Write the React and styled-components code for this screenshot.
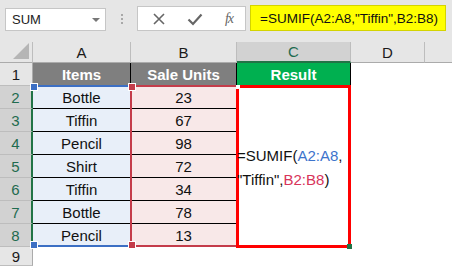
import React from 'react'
import styled, { createGlobalStyle } from 'styled-components'

const GlobalStyle = createGlobalStyle`
  body {
    margin: 0;
    background: #ffffff;
    font-family: "Liberation Sans", Arial, sans-serif;
  }
`

const items = [
  ['Bottle', 23],
  ['Tiffin', 67],
  ['Pencil', 98],
  ['Shirt', 72],
  ['Tiffin', 34],
  ['Bottle', 78],
  ['Pencil', 13],
]

const App = () => {
  return (
    <Sheet>
      <GlobalStyle />
      <Toolbar>
        <NameBox>
          <span>SUM</span>
          <Caret />
        </NameBox>
        <Dots>
          <i /><i /><i />
        </Dots>
        <Buttons>
          <svg width="14" height="14" viewBox="0 0 14 14">
            <path d="M2 2 L12 12 M12 2 L2 12" stroke="#666" strokeWidth="1.6" fill="none" />
          </svg>
          <svg width="16" height="14" viewBox="0 0 16 14">
            <path d="M1.5 7.5 L6 12 L14.5 2.5" stroke="#666" strokeWidth="2.2" fill="none" />
          </svg>
          <Fx>fx</Fx>
        </Buttons>
        <FormulaInput>=SUMIF(A2:A8,"Tiffin",B2:B8)</FormulaInput>
      </Toolbar>

      <Grid>
        <Corner>
          <svg width="16" height="16" viewBox="0 0 16 16">
            <path d="M16 0 L16 16 L0 16 Z" fill="#b5b5b5" />
          </svg>
        </Corner>
        <ColHead $col={2}>A</ColHead>
        <ColHead $col={3}>B</ColHead>
        <ColHead $col={4} $active>C</ColHead>
        <ColHead $col={5}>D</ColHead>
        <ColHead $col={6} $last />

        <RowHead $row={2}>1</RowHead>
        <TitleCell $row={2} $col={2} $bg="#7f7f7f">Items</TitleCell>
        <TitleCell $row={2} $col={3} $bg="#7f7f7f">Sale Units</TitleCell>
        <TitleCell $row={2} $col={4} $bg="#00b050">Result</TitleCell>

        {items.map(([name, units], i) => (
          <React.Fragment key={i}>
            <RowHead $row={i + 3} $active>{i + 2}</RowHead>
            <DataCell $row={i + 3} $col={2} $bg="#e8eff9">{name}</DataCell>
            <DataCell $row={i + 3} $col={3} $bg="#f8e8e8">{units}</DataCell>
          </React.Fragment>
        ))}

        <ResultCell>
          <div>
            =SUMIF(<Ref $c="#3d74cc">A2:A8</Ref>,<br />
            "Tiffin",<Ref $c="#d8345a">B2:B8</Ref>)
          </div>
        </ResultCell>

        <RangeBox $col={2} $c="#3c6fc4">
          <Handle $c="#3c6fc4" $pos="tl" />
          <Handle $c="#3c6fc4" $pos="bl" />
        </RangeBox>
        <RangeBox $col={3} $c="#c43c4a">
          <Handle $c="#c43c4a" $pos="tl" />
          <Handle $c="#c43c4a" $pos="bl" />
        </RangeBox>

        <RowHead $row={10}>9</RowHead>
      </Grid>
    </Sheet>
  )
}

const Sheet = styled.div`
  width: 452px;
  height: 267px;
  overflow: hidden;
  background: #ffffff;
`

const Toolbar = styled.div`
  height: 42px;
  box-sizing: border-box;
  background: #e6e6e6;
  display: flex;
  align-items: flex-end;
  padding: 0 0 11px 5px;
`

const NameBox = styled.div`
  width: 101px;
  height: 23px;
  box-sizing: border-box;
  background: #ffffff;
  border: 1px solid #c6c6c6;
  display: flex;
  align-items: center;
  justify-content: space-between;
  padding: 0 5px 0 6px;
  font-size: 13px;
  color: #222;
`

const Caret = styled.span`
  width: 0;
  height: 0;
  border-left: 4px solid transparent;
  border-right: 4px solid transparent;
  border-top: 4px solid #777;
`

const Dots = styled.div`
  width: 31px;
  height: 25px;
  display: flex;
  flex-direction: column;
  align-items: center;
  justify-content: center;
  gap: 2px;

  i {
    width: 2px;
    height: 2px;
    background: #a8a8a8;
  }
`

const Buttons = styled.div`
  width: 109px;
  height: 25px;
  box-sizing: border-box;
  background: #ffffff;
  border: 1px solid #c6c6c6;
  display: flex;
  align-items: center;
  justify-content: space-between;
  padding: 0 12px 0 14px;
`

const Fx = styled.span`
  font-family: "Liberation Serif", "Times New Roman", serif;
  font-style: italic;
  font-size: 14px;
  color: #666;
  letter-spacing: -1px;
`

const FormulaInput = styled.div`
  margin-left: 4px;
  width: 196px;
  height: 26px;
  box-sizing: border-box;
  background: #ffff00;
  border: 1px solid #d4d400;
  display: flex;
  align-items: center;
  padding-left: 9px;
  font-size: 13.5px;
  color: #111;
  white-space: nowrap;
  overflow: hidden;
`

const Grid = styled.div`
  display: grid;
  grid-template-columns: 33px 98px 106px 114px 74px 1fr;
  grid-template-rows: 21px 23px repeat(7, 23px) 19px;
  font-size: 15px;
`

const Corner = styled.div`
  grid-row: 1;
  grid-column: 1;
  background: #e6e6e6;
  border-right: 1px solid #bdbdbd;
  border-bottom: 1px solid #ababab;
  display: flex;
  align-items: flex-end;
  justify-content: flex-end;
  padding: 0 3px 3px 0;
`

const ColHead = styled.div`
  grid-row: 1;
  grid-column: ${p => p.$col};
  background: ${p => (p.$active ? '#d2d2d2' : '#e6e6e6')};
  color: ${p => (p.$active ? '#1f6b4f' : '#1a1a1a')};
  border-right: ${p => (p.$last ? 'none' : '1px solid #bdbdbd')};
  border-bottom: ${p => (p.$active ? '2px solid #217346' : '1px solid #ababab')};
  display: flex;
  align-items: center;
  justify-content: center;
`

const RowHead = styled.div`
  grid-column: 1;
  grid-row: ${p => p.$row};
  background: ${p => (p.$active ? '#d2d2d2' : '#e6e6e6')};
  color: ${p => (p.$active ? '#1f6b4f' : '#1a1a1a')};
  border-right: ${p => (p.$active ? '2px solid #217346' : '1px solid #ababab')};
  border-bottom: 1px solid #bdbdbd;
  display: flex;
  align-items: center;
  justify-content: center;
`

const TitleCell = styled.div`
  grid-column: ${p => p.$col};
  grid-row: ${p => p.$row};
  background: ${p => p.$bg};
  color: #ffffff;
  font-weight: bold;
  border-right: 1px solid #000;
  border-bottom: 1px solid #000;
  display: flex;
  align-items: center;
  justify-content: center;
`

const DataCell = styled.div`
  grid-column: ${p => p.$col};
  grid-row: ${p => p.$row};
  background: ${p => p.$bg};
  color: #111;
  border-right: 1px solid #000;
  border-bottom: 1px solid #000;
  display: flex;
  align-items: center;
  justify-content: center;
`

const ResultCell = styled.div`
  grid-column: 4;
  grid-row: 3 / span 7;
  position: relative;
  z-index: 2;
  margin: -1px 0 -1px -1px;
  border: 3px solid #ff0000;
  background: #ffffff;
  display: flex;
  align-items: center;
  line-height: 24px;
  color: #111;
  white-space: nowrap;

  div {
    margin-left: -2px;
    padding-top: 2px;
  }

  &::before {
    content: '';
    position: absolute;
    left: -3px;
    top: -3px;
    width: 4px;
    height: 4px;
    background: #ffffff;
  }

  &::after {
    content: '';
    position: absolute;
    right: -4px;
    bottom: -4px;
    width: 5px;
    height: 5px;
    background: #217346;
  }
`

const Ref = styled.span`
  color: ${p => p.$c};
`

const RangeBox = styled.div`
  grid-column: ${p => p.$col};
  grid-row: 3 / span 7;
  position: relative;
  z-index: 1;
  margin: -1px -1px 0 -1px;
  border: 2px solid ${p => p.$c};
  border-left-color: ${p => (p.$col === 2 ? 'transparent' : p.$c)};
  pointer-events: none;
`

const Handle = styled.span`
  position: absolute;
  left: -4px;
  width: 6px;
  height: 6px;
  background: ${p => p.$c};
  border: 1px solid #ffffff;
  ${p => (p.$pos === 'tl' ? 'top: -4px;' : 'bottom: -4px;')}
`

export default App
